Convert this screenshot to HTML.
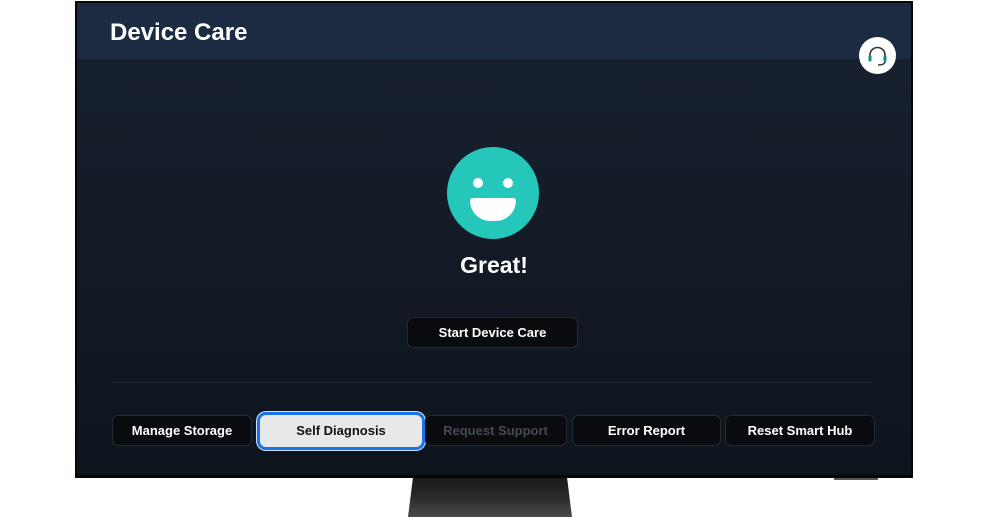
<!DOCTYPE html>
<html><head><style>
*{margin:0;padding:0;box-sizing:border-box}
body{width:985px;height:520px;background:#fff;position:relative;overflow:hidden;font-family:"Liberation Sans",sans-serif}
.tv{position:absolute;left:75px;top:1px;width:838px;height:477px;background:#050608;}
.scr{position:absolute;left:2px;top:2px;right:2px;bottom:3px;background:linear-gradient(#19222f 0%,#141c28 40%,#0e141c 100%);overflow:hidden}
.hdr{position:absolute;left:0;top:0;right:0;height:56px;background:#1c2a42}
.title{position:absolute;left:33px;top:16px;color:#fff;font-weight:bold;font-size:24px}
.hs{position:absolute;left:782px;top:34px;width:37px;height:37px;border-radius:50%;background:#fff}
.face{position:absolute;left:370px;top:144px;width:92px;height:92px;border-radius:50%;background:#24c7ba}
.eye{position:absolute;top:31px;width:10px;height:10px;border-radius:50%;background:#fff}
.mouth{position:absolute;left:23px;top:51px;width:46px;height:23px;background:#fff;border-radius:3px 3px 23px 23px/3px 3px 23px 23px}
.great{position:absolute;left:0;right:0;top:249px;text-align:center;color:#fff;font-weight:bold;font-size:23px}
.btn{position:absolute;height:31px;background:#090b0f;border:1px solid #262b33;border-radius:6px;color:#fff;font-size:13px;font-weight:bold;text-align:center;line-height:29px}
.line{position:absolute;left:35px;width:760px;top:379px;height:1px;background:#1f2631}
.stand{position:absolute;left:408px;top:478px;width:164px;height:39px;background:linear-gradient(#1a1a1a,#2a2a2a 50%,#4a4a4a);clip-path:polygon(3% 0,97% 0,100% 100%,0 100%)}
</style></head><body>
<div class="stand"></div>
<div style="position:absolute;left:834px;top:477px;width:44px;height:3px;background:#555"></div>
<div class="tv"><div class="scr">
<div class="hdr"></div>
<div class="title">Device Care</div>
<div class="hs"><svg width="37" height="37" viewBox="0 0 37 37"><path d="M11 21v-3a7.5 7.5 0 0 1 15 0v3" fill="none" stroke="#333" stroke-width="1.6"/><rect x="9.5" y="18.5" width="3" height="6" rx="1" fill="#0a8f8a"/><rect x="24.5" y="18.5" width="3" height="6" rx="1" fill="#0a8f8a"/><path d="M26 24.5q0 3.5-7 3.5" fill="none" stroke="#333" stroke-width="1.4"/></svg></div>
<div class="face"><div class="eye" style="left:26px"></div><div class="eye" style="left:56px"></div><div class="mouth"></div></div>
<div class="great">Great!</div>
<div class="btn" style="left:330px;top:314px;width:171px">Start Device Care</div>
<div class="line"></div>
<div class="btn" style="left:35px;top:412px;width:140px">Manage Storage</div>
<div class="btn" style="left:180px;top:409px;width:168px;height:38px;background:#e8e8e8;border:3px solid #1a73e8;color:#111;line-height:32px;border-radius:9px;box-shadow:0 0 0 1px #cfe0ff">Self Diagnosis</div>
<div class="btn" style="left:348px;top:412px;width:142px;color:#454a52;border-left:none">Request Support</div>
<div class="btn" style="left:495px;top:412px;width:149px">Error Report</div>
<div class="btn" style="left:648px;top:412px;width:150px">Reset Smart Hub</div>
</div></div>
</body></html>
